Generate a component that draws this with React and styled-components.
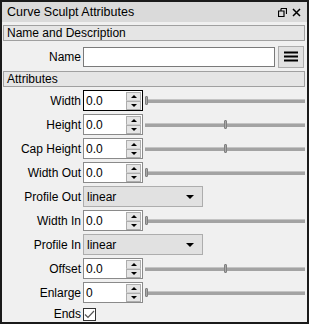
import React from 'react';
import styled, { createGlobalStyle } from 'styled-components';

const GlobalStyle = createGlobalStyle`
    html, body {
        margin: 0;
        padding: 0;
        background: #f0f0f0;
    }
    * {
        box-sizing: border-box;
    }
`;

const Panel = styled.div`
    display: flex;
    flex-direction: column;
    width: 309px;
    height: 324px;
    overflow: hidden;
    background: #f0f0f0;
    border: 2px solid #1a1a1a;
    font-family: "Liberation Sans", Arial, sans-serif;
    font-size: 12px;
    color: #000;
`;

const TitleBar = styled.div`
    display: flex;
    align-items: center;
    height: 21px;
    padding: 0 6px 0 5px;
    background: #dadada;
    font-size: 12.5px;
    .title {
        flex: 1;
    }
    .btns {
        display: flex;
        align-items: center;
        gap: 5px;
    }
`;

const SectionHeader = styled.div`
    height: 16px;
    margin: ${p => p.$top || 0}px 2px 0 1px;
    padding-left: 3px;
    line-height: 14px;
    background: #e5e5e5;
    border: 1px solid #a0a0a0;
`;

const NameRow = styled.div`
    display: flex;
    align-items: center;
    height: 26px;
    margin-top: 3px;
    label {
        width: 79px;
        text-align: right;
        margin-right: 2px;
    }
`;

const TextInput = styled.div`
    width: 192px;
    height: 20px;
    background: #fff;
    border: 1px solid #7a7a7a;
`;

const MenuButton = styled.div`
    display: flex;
    align-items: center;
    justify-content: center;
    width: 26px;
    height: 22px;
    margin-left: 3px;
    background: #e1e1e1;
    border: 1px solid #adadad;
`;

const Form = styled.div`
    display: grid;
    grid-template-columns: 79px 1fr;
    column-gap: 2px;
    row-gap: 3px;
    margin-top: 3px;
`;

const Label = styled.div`
    display: flex;
    align-items: center;
    justify-content: flex-end;
    height: ${p => p.$h || 21}px;
    white-space: nowrap;
`;

const Field = styled.div`
    display: flex;
    align-items: center;
    height: ${p => p.$h || 21}px;
`;

const SpinBox = styled.div`
    display: flex;
    align-items: center;
    width: 60px;
    height: 21px;
    padding: 0 1px 0 2px;
    background: #fff;
    border: 1px solid ${p => (p.$focus ? '#000' : '#8a8a8a')};
    .val {
        flex: 1;
    }
    .arrows {
        display: flex;
        flex-direction: column;
        width: 15px;
    }
`;

const SpinArrow = styled.div`
    display: flex;
    align-items: center;
    justify-content: center;
    height: 9px;
    background: #e5e5e5;
    border: 1px solid #adadad;
    &:first-child {
        border-bottom-color: #d0d0d0;
    }
    &::after {
        content: '';
        border-left: 3px solid transparent;
        border-right: 3px solid transparent;
        ${p => (p.$up ? 'border-bottom: 3px solid #000;' : 'border-top: 3px solid #000;')}
    }
`;

const Slider = styled.div`
    position: relative;
    flex: 1;
    height: 21px;
    margin: 0 2px;
    &::before {
        content: '';
        position: absolute;
        left: 0;
        right: 0;
        top: 9px;
        height: 3px;
        background: #a3a3a3;
        border-top: 1px solid #c4c4c4;
    }
`;

const Handle = styled.div`
    position: absolute;
    top: 6px;
    width: 3px;
    height: 9px;
    background: #a8a8a8;
    border: 1px solid #808080;
    border-radius: 1px;
`;

const Combo = styled.div`
    display: flex;
    align-items: center;
    width: 120px;
    height: 21px;
    padding: 0 8px 0 3px;
    background: #e1e1e1;
    border: 1px solid #adadad;
    .val {
        flex: 1;
    }
    &::after {
        content: '';
        border-left: 4px solid transparent;
        border-right: 4px solid transparent;
        border-top: 4px solid #000;
    }
`;

const Check = styled.div`
    width: 13px;
    height: 13px;
    margin-top: 1px;
    background: #fff;
    border: 1px solid #333;
    display: flex;
    align-items: center;
    justify-content: center;
`;

const rows = [
    { label: 'Width', type: 'spin', value: '0.0', pos: 0, focus: true },
    { label: 'Height', type: 'spin', value: '0.0', pos: 0.5 },
    { label: 'Cap Height', type: 'spin', value: '0.0', pos: 0.5 },
    { label: 'Width Out', type: 'spin', value: '0.0', pos: 0 },
    { label: 'Profile Out', type: 'combo', value: 'linear' },
    { label: 'Width In', type: 'spin', value: '0.0', pos: 0 },
    { label: 'Profile In', type: 'combo', value: 'linear' },
    { label: 'Offset', type: 'spin', value: '0.0', pos: 0.5 },
    { label: 'Enlarge', type: 'spin', value: '0', pos: 0 },
];

function App() {
    return (
        <>
            <GlobalStyle />
            <Panel>
                <TitleBar>
                    <span className="title">Curve Sculpt Attributes</span>
                    <div className="btns">
                        <svg width="9" height="9" viewBox="0 0 9 9">
                            <path d="M3 0.5h5.5v5.5M3 0.5v2M0.5 3h5.5v5.5h-5.5z" fill="none" stroke="#000" strokeWidth="1.2" />
                        </svg>
                        <svg width="9" height="9" viewBox="0 0 9 9">
                            <path d="M1 1l7 7M8 1l-7 7" stroke="#000" strokeWidth="1.5" />
                        </svg>
                    </div>
                </TitleBar>

                <SectionHeader $top={3}>Name and Description</SectionHeader>
                <NameRow>
                    <label>Name</label>
                    <TextInput />
                    <MenuButton>
                        <svg width="14" height="11" viewBox="0 0 14 11">
                            <path d="M0 1.5h14M0 5.5h14M0 9.5h14" stroke="#000" strokeWidth="2" />
                        </svg>
                    </MenuButton>
                </NameRow>

                <SectionHeader $top={2}>Attributes</SectionHeader>
                <Form>
                    {rows.map((r) => (
                        <React.Fragment key={r.label}>
                            <Label>{r.label}</Label>
                            <Field>
                                {r.type === 'spin' ? (
                                    <>
                                        <SpinBox $focus={r.focus}>
                                            <span className="val">{r.value}</span>
                                            <div className="arrows">
                                                <SpinArrow $up />
                                                <SpinArrow />
                                            </div>
                                        </SpinBox>
                                        <Slider>
                                            <Handle style={{ left: `calc(${r.pos * 100}% - ${r.pos * 3}px)` }} />
                                        </Slider>
                                    </>
                                ) : (
                                    <Combo>
                                        <span className="val">{r.value}</span>
                                    </Combo>
                                )}
                            </Field>
                        </React.Fragment>
                    ))}
                    <Label $h={16}>Ends</Label>
                    <Field $h={16}>
                        <Check>
                            <svg width="11" height="9" viewBox="0 0 11 9">
                                <path d="M1 4.5l3 3l6 -6.5" fill="none" stroke="#555" strokeWidth="1.2" />
                            </svg>
                        </Check>
                    </Field>
                </Form>
            </Panel>
        </>
    );
}

export default App;
